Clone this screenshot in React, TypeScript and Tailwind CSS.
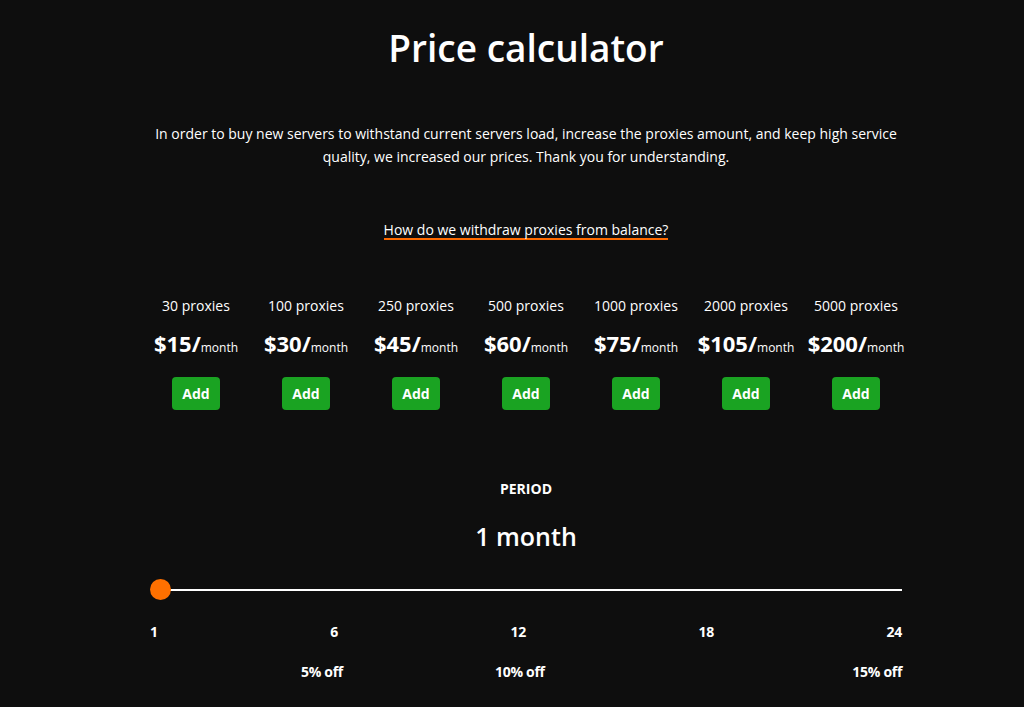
import React from "react";

const plans = [
  { n: "30 proxies", p: "$15/" },
  { n: "100 proxies", p: "$30/" },
  { n: "250 proxies", p: "$45/" },
  { n: "500 proxies", p: "$60/" },
  { n: "1000 proxies", p: "$75/" },
  { n: "2000 proxies", p: "$105/" },
  { n: "5000 proxies", p: "$200/" },
];

export default function App() {
  return (
    <div
      className="min-h-[707px] w-full bg-[#0e0e0e] text-white pl-[28px]"
      style={{ fontFamily: '"Open Sans", "Noto Sans", sans-serif' }}
    >
      <div className="mx-auto w-[770px] flex flex-col items-center">
        <h1 className="pt-[26px] text-[37px] leading-[44px] font-semibold">Price calculator</h1>
        <p className="mt-[52px] w-[770px] text-center text-[14px] leading-[23px]">
          In order to buy new servers to withstand current servers load, increase the proxies amount, and keep high service
          quality, we increased our prices. Thank you for understanding.
        </p>
        <a className="mt-[53px] inline-block text-[14px] leading-[17px] border-b-2 border-[#ff6a00] cursor-pointer">
          How do we withdraw proxies from balance?
        </a>

        <div className="mt-[56px] grid grid-cols-7 w-[770px]">
          {plans.map((pl) => (
            <div key={pl.n} className="flex flex-col items-center">
              <div className="text-[14px] leading-[20px]">{pl.n}</div>
              <div className="mt-[12px] leading-[30px] whitespace-nowrap">
                <span className="text-[22px] font-bold">{pl.p}</span>
                <span className="text-[12px]">month</span>
              </div>
              <button className="mt-[14px] h-[33px] w-[48px] rounded-[4px] bg-[#1aa322] text-[14px] font-bold text-white">
                Add
              </button>
            </div>
          ))}
        </div>

        <div className="mt-[70px] text-[14px] leading-[18px] font-bold">PERIOD</div>
        <div className="mt-[22px] text-[25px] leading-[32px] font-semibold">1 month</div>

        <div className="mt-[27px] w-[752px] h-[22px] relative flex items-center">
          <div className="h-[2px] w-full bg-white ml-[10px]" />
          <div className="absolute left-0 top-0 h-[21px] w-[21px] rounded-full bg-[#ff7000]" />
        </div>

        <div className="mt-[22px] w-[752px] flex justify-between text-[14px] leading-[18px] font-bold tracking-[-0.3px]">
          <span>1</span>
          <span>6</span>
          <span>12</span>
          <span>18</span>
          <span>24</span>
        </div>
        <div className="mt-[22px] w-[752px] flex text-[14px] leading-[18px] font-bold tracking-[-0.3px]">
          <span className="ml-[151px]">5% off</span>
          <span className="ml-[152px]">10% off</span>
          <span className="ml-auto">15% off</span>
        </div>
      </div>
    </div>
  );
}
